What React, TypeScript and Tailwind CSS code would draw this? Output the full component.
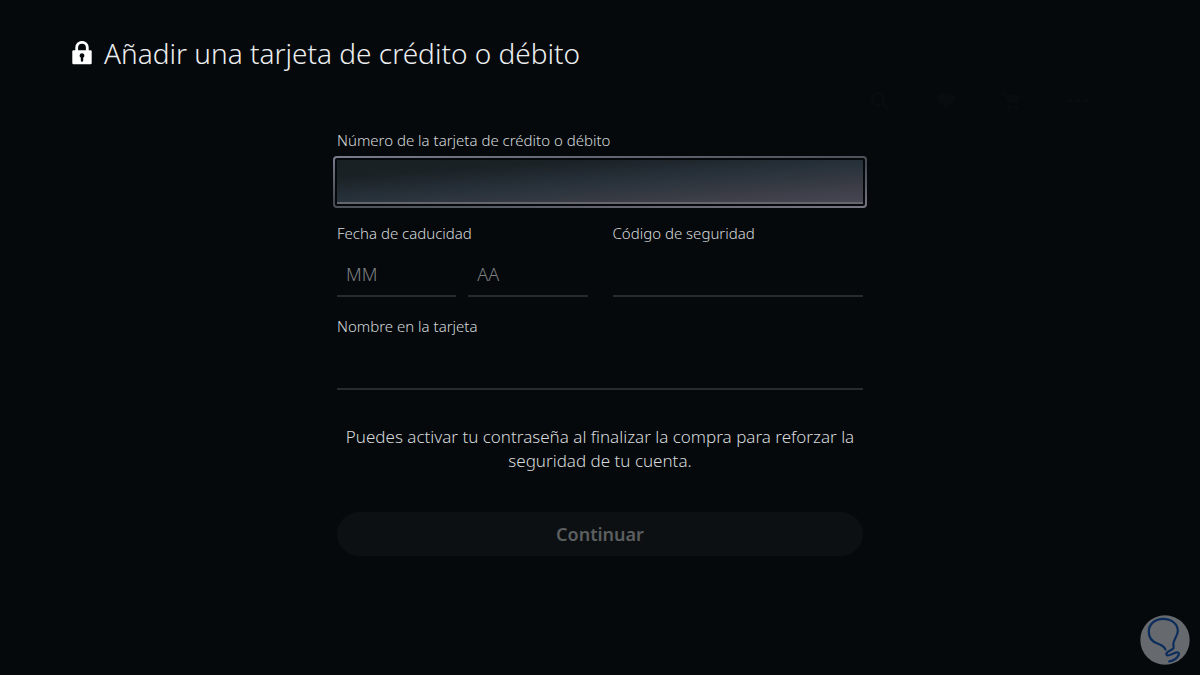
import type { InputHTMLAttributes } from 'react';

function LockIcon() {
  return (
    <svg viewBox="0 0 20 24" className="h-6 w-5 shrink-0" aria-hidden="true">
      <path d="M4.7 11V6.6a5.3 5.3 0 0 1 10.6 0V11" fill="none" stroke="#fff" strokeWidth="2.8" />
      <rect x="0.3" y="9.3" width="19.4" height="14" rx="1.2" fill="#fff" />
      <path d="M10 12.3a2.4 2.4 0 0 1 1.2 4.5v2.7a1.2 1.2 0 0 1-2.4 0v-2.7a2.4 2.4 0 0 1 1.2-4.5z" fill="#05090c" />
    </svg>
  );
}

function StoreBar() {
  return (
    <div className="flex h-6 items-center justify-end gap-[46px] pr-[112px] text-[#080c0f]" aria-hidden="true">
      <svg viewBox="0 0 20 20" className="size-5" fill="none" stroke="currentColor" strokeWidth="3">
        <circle cx="8" cy="8" r="6" />
        <path d="M13 13l6 6" />
      </svg>
      <svg viewBox="0 0 20 20" className="size-5" fill="currentColor">
        <path d="M10 18L2 10a5 5 0 0 1 8-6 5 5 0 0 1 8 6z" />
      </svg>
      <svg viewBox="0 0 20 20" className="size-5" fill="currentColor">
        <path d="M0 2h4l1 2h14l-3 8H6L3 4H0z" />
        <circle cx="7" cy="16" r="2" />
        <circle cx="15" cy="16" r="2" />
      </svg>
      <svg viewBox="0 0 20 20" className="size-5" fill="currentColor">
        <circle cx="2" cy="10" r="2" />
        <circle cx="10" cy="10" r="2" />
        <circle cx="18" cy="10" r="2" />
      </svg>
    </div>
  );
}

const labelClass = 'block text-[15px] leading-5 text-[#d6d9db]';

function LineInput(props: InputHTMLAttributes<HTMLInputElement>) {
  return (
    <input
      type="text"
      className="block h-11 w-full min-w-0 border-b-2 border-[#272b2d] bg-transparent px-[9px] text-lg text-[#d5d8da] outline-none placeholder:text-[#7e8183] placeholder:opacity-100"
      {...props}
    />
  );
}

function BulbBadge() {
  return (
    <svg viewBox="0 0 50 50" className="size-[50px]" role="img" aria-label="Bombilla">
      <circle cx="25" cy="25" r="24.7" fill="#66696d" />
      <path
        d="M25.5 34.5C24 31.5 21.5 30 18 28.8C11.500 26.500 8.500 21.500 8.800 16C9.200 8.500 15.500 3.800 23 3.800C31.500 3.800 37.800 9 37.800 16C37.800 21.500 33 24.500 33.300 29.500C33.400 31.500 34.200 32.600 33.200 33.700C31 35.600 26.300 36.200 26.300 39C26.300 41.500 30.500 40 34 38.300C37.500 36.600 39.800 37.400 38.600 40C37.200 43 33.200 45.800 29.200 46.400"
        fill="none"
        stroke="#0c2d5c"
        strokeWidth="2.2"
        strokeLinecap="round"
        strokeLinejoin="round"
      />
    </svg>
  );
}

export default function App() {
  return (
    <div className="relative min-h-screen bg-[#05090c] font-['Noto_Sans','Open_Sans',sans-serif] font-light">
      <header className="flex items-center gap-3 px-[72px] pt-[33px]">
        <LockIcon />
        <h1 className="text-[28px] leading-10 text-[#eceeef]">Añadir una tarjeta de crédito o débito</h1>
      </header>
      <div className="pt-4">
        <StoreBar />
      </div>
      <main className="px-6 pt-[17px] pb-10">
        <form className="mx-auto flex max-w-[526px] flex-col gap-[19px]" onSubmit={(e) => e.preventDefault()}>
          <div className="flex flex-col gap-1.5">
            <label htmlFor="number" className={labelClass}>
              Número de la tarjeta de crédito o débito
            </label>
            <div className="-mx-1 -mb-1 rounded-[4px] bg-[linear-gradient(176deg,#7b7c8c_0%,#454a52_50%,#777783_100%)] p-0.5">
              <div className="rounded-[2px] bg-[#05090c] p-0.5">
                <input
                  id="number"
                  type="text"
                  inputMode="numeric"
                  className="block h-11 w-full border-b-2 border-[#64656e] bg-[linear-gradient(176deg,#192023_0%,#1b2226_22%,#27313a_50%,#383b44_75%,#474653_100%)] px-[9px] text-lg text-[#d5d8da] outline-none"
                />
              </div>
            </div>
          </div>

          <div className="grid grid-cols-2 gap-[25px]">
            <fieldset className="min-w-0">
              <legend className={labelClass}>Fecha de caducidad</legend>
              <div className="grid grid-cols-2 gap-3 pt-2.5">
                <LineInput aria-label="Mes" placeholder="MM" />
                <LineInput aria-label="Año" placeholder="AA" />
              </div>
            </fieldset>
            <div className="flex flex-col gap-2.5">
              <label htmlFor="code" className={labelClass}>
                Código de seguridad
              </label>
              <LineInput id="code" />
            </div>
          </div>

          <div className="flex flex-col gap-2.5">
            <label htmlFor="name" className={labelClass}>
              Nombre en la tarjeta
            </label>
            <LineInput id="name" />
          </div>

          <p className="pt-4 text-center text-[17px] leading-6 text-[#d6d9db]">
            Puedes activar tu contraseña al finalizar la compra para reforzar la seguridad de tu cuenta.
          </p>
          <div className="pt-5">
            <button type="submit" disabled className="h-11 w-full rounded-full bg-[#0c1012] text-lg font-semibold text-[#5c5f60]">
              Continuar
            </button>
          </div>
        </form>
      </main>
      <div className="absolute right-2.5 bottom-2.5">
        <BulbBadge />
      </div>
    </div>
  );
}
